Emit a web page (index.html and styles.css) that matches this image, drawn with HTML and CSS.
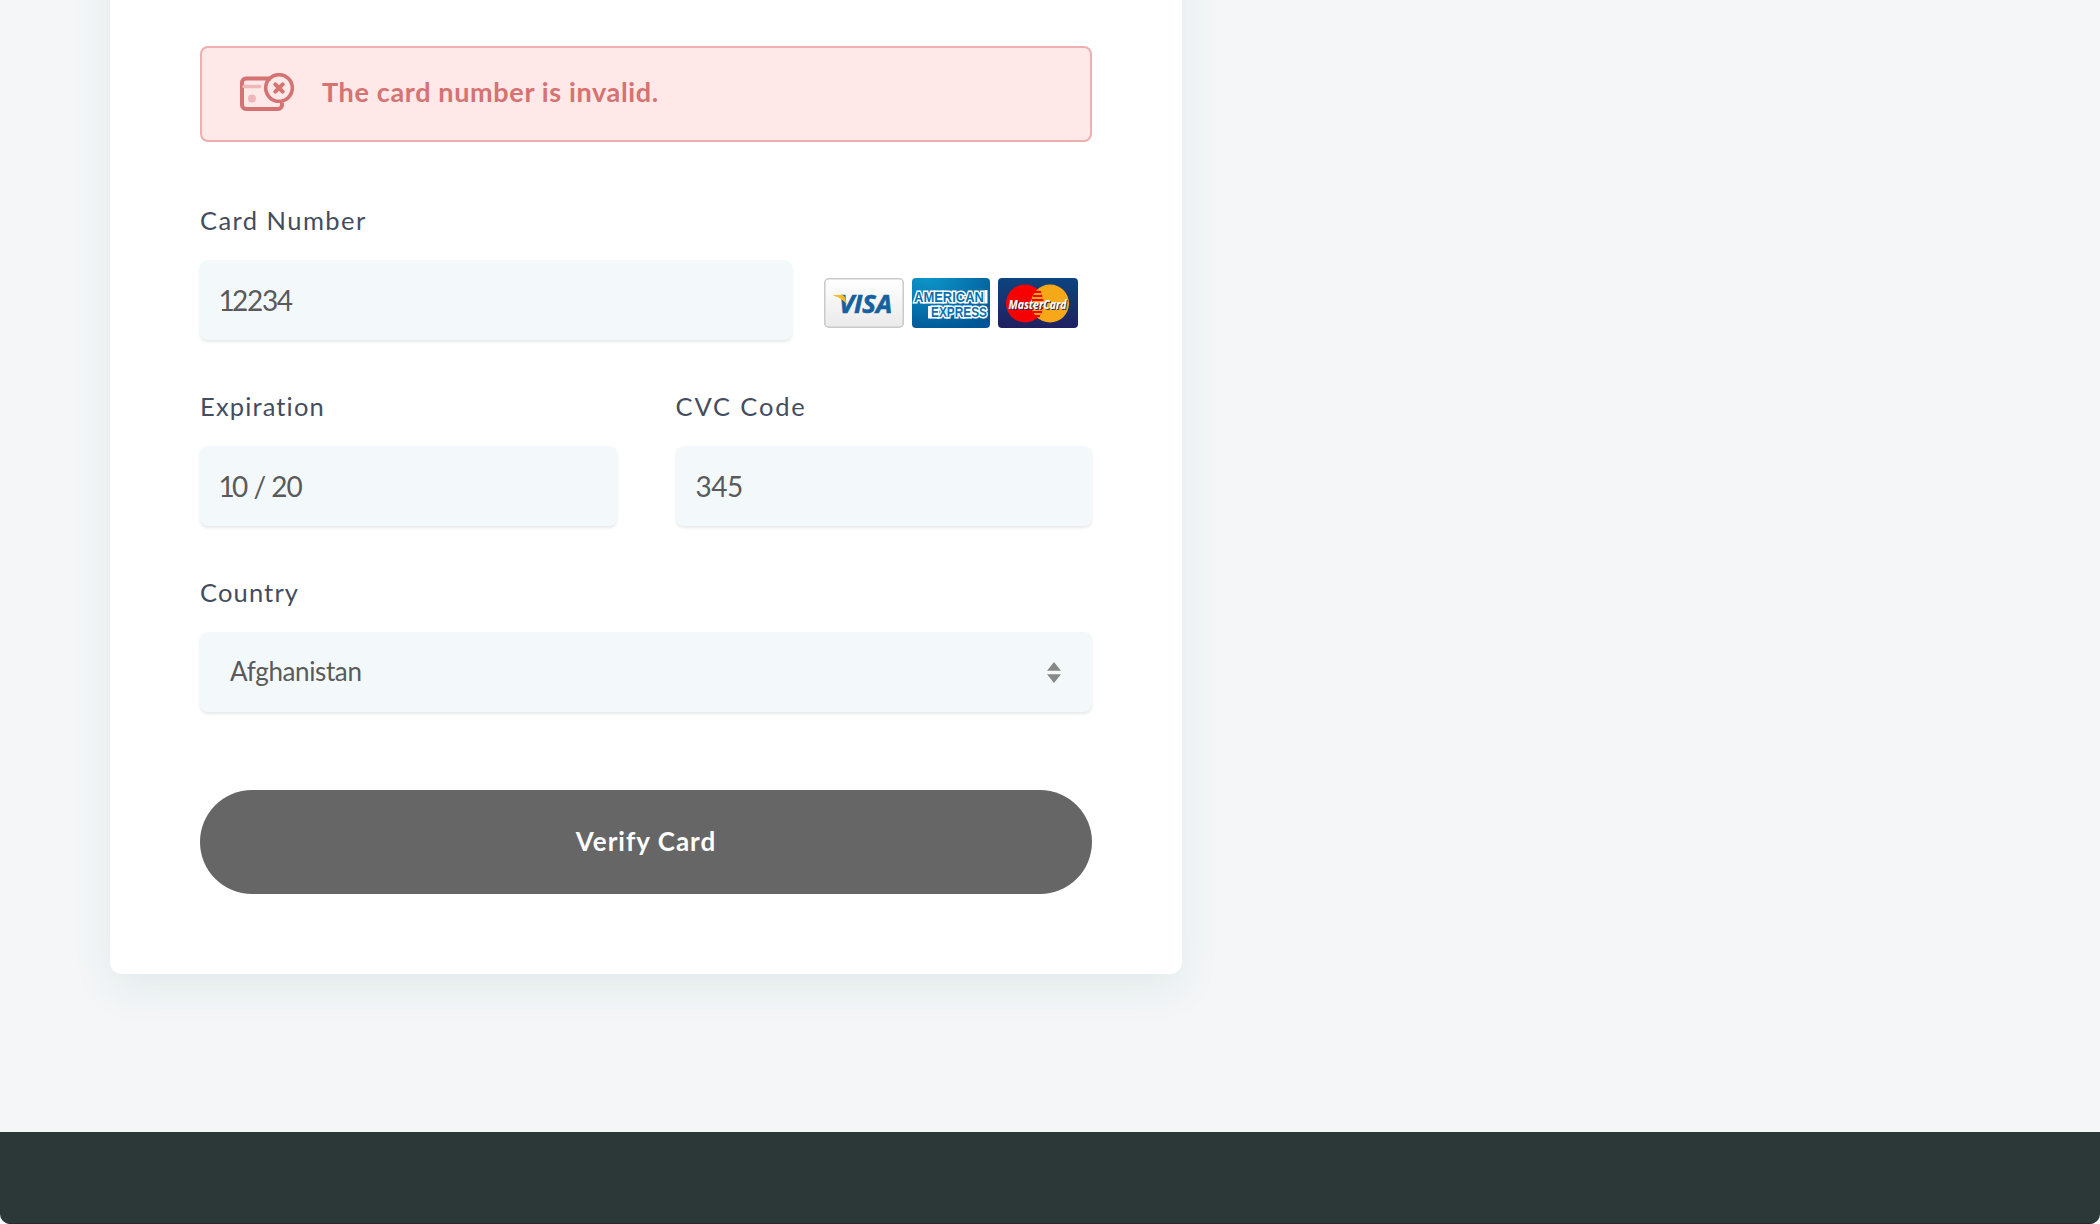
FILE: index.html
```html
<!DOCTYPE html>
<html lang="en">
<head>
<meta charset="utf-8">
<title>Verify Card</title>
<link rel="stylesheet" href="styles.css">
</head>
<body>
<div class="page">
  <main class="main">
    <form class="card">
      <div class="alert">
        <svg class="alert-icon" width="56" height="40" viewBox="0 0 56 40" fill="none">
          <path d="M31 5.500H6A4 4 0 0 0 2 9.500V32A4 4 0 0 0 6 36H38A4 4 0 0 0 42 32V30" stroke="#d57272" stroke-width="4"/>
          <path d="M4 13.500H19.500" stroke="#efb7b7" stroke-width="3.500" stroke-linecap="round"/>
          <circle cx="12" cy="25.500" r="4" fill="#efb7b7"/>
          <circle cx="39" cy="15" r="13.300" stroke="#d57272" stroke-width="3.600"/>
          <path d="M35.300 11.300L42.700 18.700M42.700 11.300L35.300 18.700" stroke="#d57272" stroke-width="4" stroke-linecap="round"/>
        </svg>
        <span class="alert-text">The card number is invalid.</span>
      </div>
      <div class="field">
        <span class="label label-number">Card Number</span>
        <div class="number-row">
          <div class="input input-number"><span class="value v-number"><span class="one">1</span>2234</span></div>
          <div class="brands">
            <svg width="80" height="50" viewBox="0 0 80 50">
              <defs><linearGradient id="vg" x2="0" y2="1"><stop stop-color="#fff"/><stop offset="1" stop-color="#eaeaea"/></linearGradient></defs>
              <rect x=".75" y=".75" width="78.500" height="48.500" rx="4" fill="url(#vg)" stroke="#cacaca" stroke-width="1.500"/>
              <text x="15" y="34.500" class="logo-visa" textLength="53" lengthAdjust="spacingAndGlyphs">VISA</text>
              <path d="M9.500 17H18.500Q20.500 17.300 21 20L23 27Q18 19.500 9.500 17.800Z" fill="#f9bd20"/>
            </svg>
            <svg width="78" height="50" viewBox="0 0 78 50">
              <defs>
                <radialGradient id="ag" cx=".2" cy="0" r="1.100"><stop stop-color="#0d96c8"/><stop offset="1" stop-color="#005596"/></radialGradient>
              </defs>
              <rect width="78" height="50" rx="4" fill="url(#ag)"/>
              <path d="M74 12V25.500M17.500 28V40.500" fill="none" stroke="#fff" stroke-width="3"/>
              <g class="logo-amex">
                <text x="2" y="23.500" textLength="70" lengthAdjust="spacingAndGlyphs">AMERICAN</text>
                <text x="19" y="39" textLength="56" lengthAdjust="spacingAndGlyphs">EXPRESS</text>
              </g>
            </svg>
            <svg width="80" height="50" viewBox="0 0 80 50">
              <defs><linearGradient id="mg" x2="0" y2="1"><stop stop-color="#0c447f"/><stop offset="1" stop-color="#202060"/></linearGradient></defs>
              <rect width="80" height="50" rx="4" fill="url(#mg)"/>
              <circle cx="52" cy="25.500" r="19" fill="#f7a818"/>
              <circle cx="27" cy="25.500" r="19" fill="#f90000"/>
              <path d="M39.500 11.200A19 19 0 0 1 39.500 39.800A19 19 0 0 1 39.500 11.200Z" fill="#f7a818"/>
              <path d="M36 14H43M35 18H44M34 22H45M34 30H45M35 34H44M36 38H42" stroke="#f90000" stroke-width="2"/>
              <text x="10.500" y="30.500" class="logo-mc" textLength="58" lengthAdjust="spacingAndGlyphs">MasterCard</text>
            </svg>
          </div>
        </div>
      </div>
      <div class="pair">
        <div class="field">
          <span class="label label-exp">Expiration</span>
          <div class="input"><span class="value v-exp"><span class="one">1</span>0 / 20</span></div>
        </div>
        <div class="field">
          <span class="label label-cvc">CVC Code</span>
          <div class="input"><span class="value v-cvc">345</span></div>
        </div>
      </div>
      <div class="field">
        <span class="label label-country">Country</span>
        <div class="input input-select">
          <span class="value v-country">Afghanistan</span>
          <svg width="14" height="21" viewBox="0 0 14 21"><path d="M7 0L14 8.700H0ZM0 12.300H14L7 21Z" fill="#888"/></svg>
        </div>
      </div>
      <button class="submit" type="button"><span>Verify Card</span></button>
    </form>
  </main>
  <footer class="footer"></footer>
</div>
</body>
</html>
```

FILE: styles.css
```css
* { box-sizing: border-box; }
body {
  margin: 0;
  background: #fff;
  font-family: Lato, "Liberation Sans", sans-serif;
  font-variant-ligatures: none;
}
.page {
  height: 1224px;
  display: flex;
  flex-direction: column;
  background: #f4f6f8;
  border-radius: 0 0 10px 10px;
  overflow: hidden;
}
.main { height: 1132px; padding-left: 110px; }
.card {
  width: 1072px;
  height: 1074px;
  margin-top: -100px;
  padding: 146px 90px 0;
  background: #fff;
  border-radius: 12px;
  box-shadow: 0 14px 40px rgba(25, 100, 90, .08);
}
.alert {
  height: 96px;
  display: flex;
  align-items: center;
  padding-left: 38px;
  background: #ffe8e8;
  border: 2px solid #ecb0b0;
  border-radius: 8px;
}
.alert-icon { margin-top: -2px; }
.alert-text {
  margin-left: 26px;
  margin-top: -5px;
  font-size: 27px;
  font-weight: 700;
  letter-spacing: .65px;
  color: #d57272;
  white-space: nowrap;
}
.field { height: 186px; display: flex; flex-direction: column; }
.alert + .field { margin-top: 58px; }
.label {
  height: 60px;
  line-height: 40px;
  font-size: 25.500px;
  color: #434d5e;
  white-space: nowrap;
}
.label-number { letter-spacing: 1.45px; }
.label-exp { letter-spacing: 1.15px; }
.label-cvc { letter-spacing: 1.85px; }
.label-country { letter-spacing: 1.15px; }
.number-row { display: flex; gap: 32px; align-items: center; }
.input {
  height: 80px;
  display: flex;
  align-items: center;
  padding: 0 20px;
  background: #f3f9fb;
  border-radius: 8px;
  box-shadow: 0 2px 3px rgba(50, 70, 85, .12);
}
.input-number { width: 592px; }
.value { font-size: 28px; color: #5a5a5a; line-height: 80px; white-space: nowrap; }
.v-number { letter-spacing: -1.3px; }
.v-exp { letter-spacing: -1px; }
.v-cvc { letter-spacing: -.5px; }
.one { margin-left: -1.500px; letter-spacing: -2.700px; }
.brands { display: flex; gap: 8px; margin-top: 6px; }
.brands svg { display: block; }
.pair { display: grid; grid-template-columns: 416.500px 416.500px; justify-content: space-between; }
.input-select { justify-content: space-between; padding: 0 31px 0 30px; }
.v-country { font-size: 26px; line-height: 78px; letter-spacing: -.38px; padding-bottom: 2px; }
.submit {
  display: flex;
  align-items: center;
  justify-content: center;
  width: 892px;
  height: 104px;
  margin-top: 32px;
  padding: 0 0 2px;
  border: 0;
  border-radius: 52px;
  background: #666;
  color: #fff;
  font: 700 26px Lato, "Liberation Sans", sans-serif;
  letter-spacing: 1px;
}
.footer { height: 92px; background: #2c3737; border-bottom: 1px solid #252b2d; }
.logo-visa { font: italic 700 24.500px "Open Sans", sans-serif; fill: #15619f; stroke: #15619f; stroke-width: .6px; }
.logo-amex {
  font: 700 14px "Liberation Sans", sans-serif;
  fill: #0872b0;
  stroke: #fff;
  stroke-width: 3px;
  paint-order: stroke;
}
.logo-mc {
  font: italic 700 12.500px "Open Sans", sans-serif;
  fill: #fff;
  text-shadow: 1px 1px 0 #26305f;
}
```
